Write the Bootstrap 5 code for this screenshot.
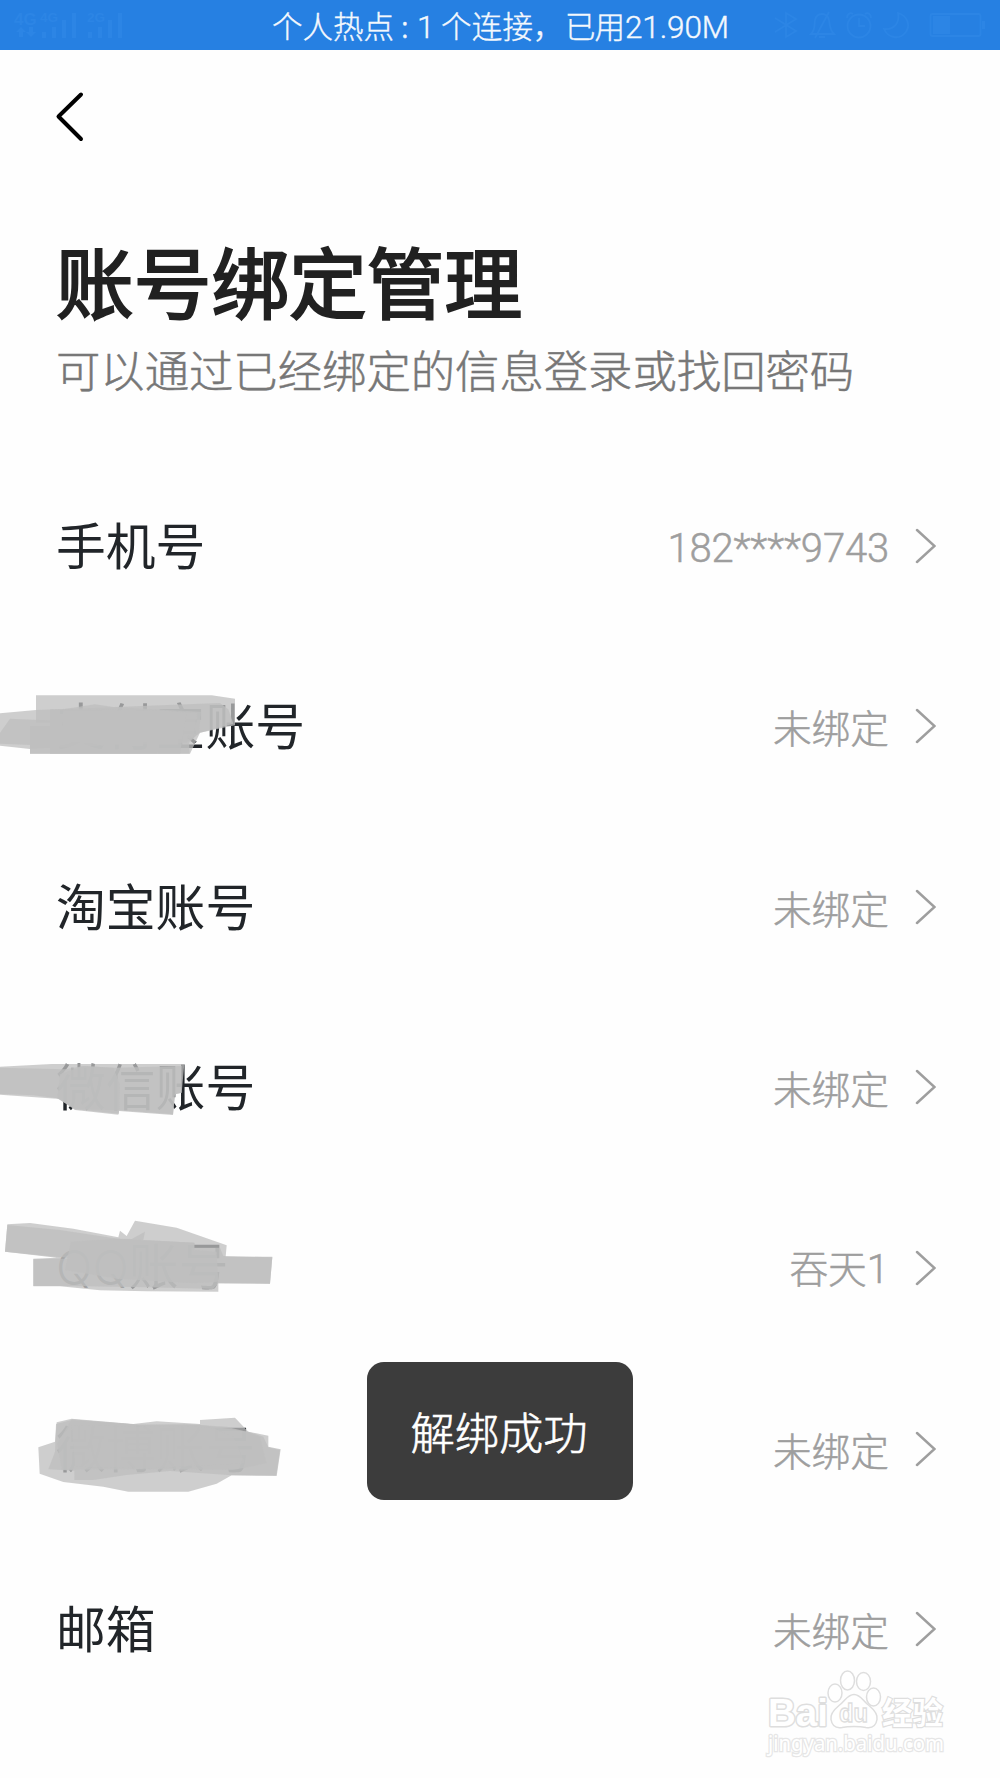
<!DOCTYPE html>
<html lang="zh-CN">
<head>
<meta charset="utf-8">
<meta name="viewport" content="width=device-width, initial-scale=1">
<title>账号绑定管理</title>
<link href="https://cdn.jsdelivr.net/npm/bootstrap@5.3.0/dist/css/bootstrap.min.css" rel="stylesheet">
<style>
body{background:#fefefe;color:#212121;font-family:"Noto Sans CJK SC",sans-serif;height:1778px;overflow:hidden}
.status-strip{height:50px;background:#2680e2;color:#f4f8fd;font-size:30.3px;line-height:50px}
.status-strip .faint{top:0;left:0;color:#2c85e5}
.hot-text{padding-top:1px}
.back-btn{margin:39px 0 0 54px;height:56px;width:34px}
.page-head{padding:89px 57px 0}
.page-head h1{font-size:77.7px;line-height:90px;font-weight:400;-webkit-text-stroke:2.2px #212121;margin:0 0 0 -1px}
.page-head p{font-size:44.35px;line-height:60px;font-weight:300;-webkit-text-stroke:.5px #777;color:#777;margin:15px 0 0 -1px}
.bind-list{padding-top:56.4px}
.bind-row{height:180.6px;padding:0 64px 0 56px;border:0;background:none}
.bind-label{font-size:49.8px;line-height:60px;padding-bottom:6px}
.bind-value{font-size:38.7px;line-height:50px;font-weight:300;-webkit-text-stroke:.5px #9e9e9e;color:#9e9e9e;margin-right:26px}
.latin{font-family:Roboto,"Noto Sans CJK SC",sans-serif;font-size:40px}
.bind-value.latin{padding-top:6px;letter-spacing:-.15px}
.status-strip .latin{font-size:31.5px}
.latin-qq{font-family:Inter,"Noto Sans CJK SC",sans-serif;font-size:48px;font-weight:300}
.smear{left:0;width:340px;fill:#bfbfbf;fill-opacity:.76}
.smear-zfb{top:35.2px}.smear-wx{top:44px}.smear-qq{top:22.4px}.smear-wb{top:41.8px}
.tip{left:367px;top:1361.5px;width:266px;height:138px;padding-right:2px;border-radius:17px;background:#3c3c3c;color:#fff;font-size:44.3px;line-height:60px;font-weight:300;-webkit-text-stroke:.6px #fff}
.stamp{left:740px;top:1660px}
</style>
<script src="https://cdn.jsdelivr.net/npm/bootstrap@5.3.0/dist/js/bootstrap.bundle.min.js"></script>
</head>
<body class="position-relative">
<header class="status-strip d-flex position-relative">
<svg class="faint position-absolute" width="1000" height="50" viewBox="0 0 1000 50" fill="none" stroke="currentColor" stroke-width="1.8">
<g fill="currentColor" stroke="none" font-family="Liberation Sans" font-weight="700">
<text x="14" y="25" font-size="17">4G</text><text x="40" y="22" font-size="13.5">4G</text><text x="87" y="22" font-size="13.5">2G</text>
<path d="M21 27l5 5h-3v5h-4v-5h-3zM31 37l-5-5h3v-5h4v5h3zM42 32h4v6h-4zM52 27h4v11h-4zM62 20h4v18h-4zM72 13h4v25h-4zM88 32h4v6h-4zM98 27h4v11h-4zM108 20h4v18h-4zM118 13h4v25h-4z"/>
</g>
<path d="M775 18l21 13-10 6V13l10 6-21 13"/>
<path d="M811 34c5-5 3-10 4-14 2-8 12-8 14 0 1 4 0 9 5 14zM815 38l14-26M819 37h6"/>
<circle cx="859" cy="26" r="11.5"/><path d="M859 18v8h6M847 18c0-4 3-6 6-4M871 18c0-4-3-6-6-4"/>
<path d="M898 13c2 10-4 17-14 16 4 9 15 11 21 4 6-7 3-17-7-20z"/>
<rect x="930.500" y="14" width="50" height="22" rx="2"/><path d="M933 16h17v18h-17zM982 21h3v8h-3z" fill="currentColor" stroke="none"/>
</svg>
<div class="hot-text position-relative mx-auto"><svg width="456" height="49" viewBox="0 0 456 49" class="d-block"><g fill="currentColor" stroke="currentColor" stroke-width=".4" font-size="30.5" font-weight="300"><text x="0" y="37" textLength="122">个人热点</text><text x="129" y="37">:</text><text x="145" y="37" class="latin">1</text><text x="169" y="37" textLength="92">个连接</text><text x="261" y="37">，</text><text x="293" y="37" textLength="60">已用</text><text x="353" y="37" textLength="104" class="latin">21.90M</text></g></svg></div>
</header>
<main>
<button class="back-btn btn p-0 border-0 d-block" aria-label="返回"><svg class="d-block" width="34" height="56" fill="none" stroke="#000" stroke-width="4" stroke-linecap="round" stroke-linejoin="round"><path d="M27 5.500L4.500 27.500 27 50"/></svg></button>
<div class="page-head">
<h1>账号绑定管理</h1>
<p>可以通过已经绑定的信息登录或找回密码</p>
</div>
<div class="bind-list list-group list-group-flush">
<div class="bind-row list-group-item d-flex align-items-center"><span class="bind-label me-auto">手机号</span><span class="bind-value latin">182****9743</span><svg class="chev" width="21" height="38" fill="none" stroke="#9e9e9e" stroke-width="2.500" stroke-linecap="round"><path d="M2 3l17.500 16L2 35"/></svg></div>
<div class="bind-row list-group-item d-flex align-items-center position-relative"><span class="bind-label me-auto">支付宝账号</span><svg class="smear smear-zfb position-absolute" height="100" viewBox="0 0 1020 300"><path d="M108 73H635L705 83V163L600 185 570 248H472L470 210 330 222 188 210V155H108z"/><path d="M0 127L108 117 660 96 685 115 700 158 600 185 560 215 330 222 90 234 0 224z"/><path d="M30 143L186 150 190 115 285 100 340 108 603 122 597 186 567 215 569 248H90V222L0 218V185z"/><path d="M90 165H188L190 120 480 118 590 125 580 200 472 212V248H90z"/><path d="M150 115L480 118 560 125 540 248H150z"/></svg><span class="bind-value">未绑定</span><svg class="chev" width="21" height="38" fill="none" stroke="#9e9e9e" stroke-width="2.500" stroke-linecap="round"><path d="M2 3l17.500 16L2 35"/></svg></div>
<div class="bind-row list-group-item d-flex align-items-center"><span class="bind-label me-auto">淘宝账号</span><span class="bind-value">未绑定</span><svg class="chev" width="21" height="38" fill="none" stroke="#9e9e9e" stroke-width="2.500" stroke-linecap="round"><path d="M2 3l17.500 16L2 35"/></svg></div>
<div class="bind-row list-group-item d-flex align-items-center position-relative"><span class="bind-label me-auto">微信账号</span><svg class="smear smear-wx position-absolute" height="90" viewBox="0 0 1020 270"><path d="M0 77L155 69H553L545 155 525 160 519 222 357 210 355 221 225 207 180 174 0 161z"/><path d="M0 80L195 85 250 75 340 80 545 75 545 155 525 160 519 220 357 208 225 205 172 172 100 163 0 159z"/><path d="M180 100L250 75 340 80 360 130 357 218 225 205 172 172z"/></svg><span class="bind-value">未绑定</span><svg class="chev" width="21" height="38" fill="none" stroke="#9e9e9e" stroke-width="2.500" stroke-linecap="round"><path d="M2 3l17.500 16L2 35"/></svg></div>
<div class="bind-row list-group-item d-flex align-items-center position-relative"><span class="bind-label me-auto"><span class="latin-qq">QQ</span>账号</span><svg class="smear smear-qq position-absolute" height="110" viewBox="0 0 1020 330"><path d="M22 73L90 69 220 86 355 112 360 92 380 108 405 62 530 83 680 136 677 170 817 170 810 252 655 250V275L440 274 300 271 180 259H100V176L170 173 15 155z"/><path d="M22 75L180 90 355 116 395 117 435 95 430 120 583 128V143H660L670 168 817 172 810 250H655L640 267 440 262 200 258H100V178L210 175 15 155z"/><path d="M212 125L350 116 583 128V150L650 155 655 245 580 250 350 236 195 210z"/></svg><span class="bind-value">吞天<span class="latin">1</span></span><svg class="chev" width="21" height="38" fill="none" stroke="#9e9e9e" stroke-width="2.500" stroke-linecap="round"><path d="M2 3l17.500 16L2 35"/></svg></div>
<div class="bind-row list-group-item d-flex align-items-center position-relative"><span class="bind-label me-auto">微博账号</span><svg class="smear smear-wb position-absolute" height="110" viewBox="0 0 1020 330"><path d="M115 142L165 125 170 67 215 56 400 72 470 64 600 72V60L705 53 745 95 805 107V140L842 148 830 228 695 226 650 251 565 275H385L310 260 190 246 119 221z"/><path d="M168 72L215 60 420 74 600 74 745 95 790 110 805 142 840 150 829 226H695L510 213 380 225 280 240H223V212L145 208 165 155z"/><path d="M215 58L420 74 560 73 680 80 740 95 780 110 800 190 700 210 450 208 185 209 172 130z"/><path d="M215 75L420 80 560 78 640 85 700 110 735 190 450 205 225 200z"/></svg><span class="bind-value">未绑定</span><svg class="chev" width="21" height="38" fill="none" stroke="#9e9e9e" stroke-width="2.500" stroke-linecap="round"><path d="M2 3l17.500 16L2 35"/></svg></div>
<div class="bind-row list-group-item d-flex align-items-center"><span class="bind-label me-auto">邮箱</span><span class="bind-value">未绑定</span><svg class="chev" width="21" height="38" fill="none" stroke="#9e9e9e" stroke-width="2.500" stroke-linecap="round"><path d="M2 3l17.500 16L2 35"/></svg></div>
</div>
</main>
<div class="tip position-absolute d-flex align-items-center justify-content-center" role="status">解绑成功</div>
<svg class="stamp position-absolute" width="230" height="110" viewBox="0 0 230 110" fill="#fff" stroke="#dedede" stroke-width="1.500">
<g font-family="Liberation Sans" font-weight="700" stroke-width="3" paint-order="stroke" stroke-linejoin="round"><text x="28" y="65.500" font-size="39" textLength="60" lengthAdjust="spacingAndGlyphs">Bai</text></g>
<ellipse cx="95" cy="33" rx="7" ry="9"/><ellipse cx="107.500" cy="20.500" rx="7" ry="9.500"/><ellipse cx="123.500" cy="21.500" rx="7" ry="9"/><ellipse cx="133.500" cy="37" rx="7" ry="9"/>
<path d="M114 34.500c7 0 9 7 15 11 6 5 9 9 8 14-1 6-5 9-11 8-5-1-8-1-12-1s-7 0-12 1c-6 1-10-2-11-8-1-5 2-9 8-14 6-4 8-11 15-11z"/>
<text x="99" y="62" font-family="Liberation Sans" font-weight="700" font-size="25" textLength="29" lengthAdjust="spacingAndGlyphs" stroke-width="1.300">du</text>
<text x="142" y="64" font-size="31" font-weight="700" textLength="61" lengthAdjust="spacingAndGlyphs" stroke-width="2.400" paint-order="stroke">经验</text>
<text x="28" y="91" font-family="Noto Sans" font-weight="400" font-size="21.500" textLength="176" lengthAdjust="spacingAndGlyphs" stroke-width="2.600" paint-order="stroke" stroke="#e6e6e6">jingyan.baidu.com</text>
</svg>
</body>
</html>
